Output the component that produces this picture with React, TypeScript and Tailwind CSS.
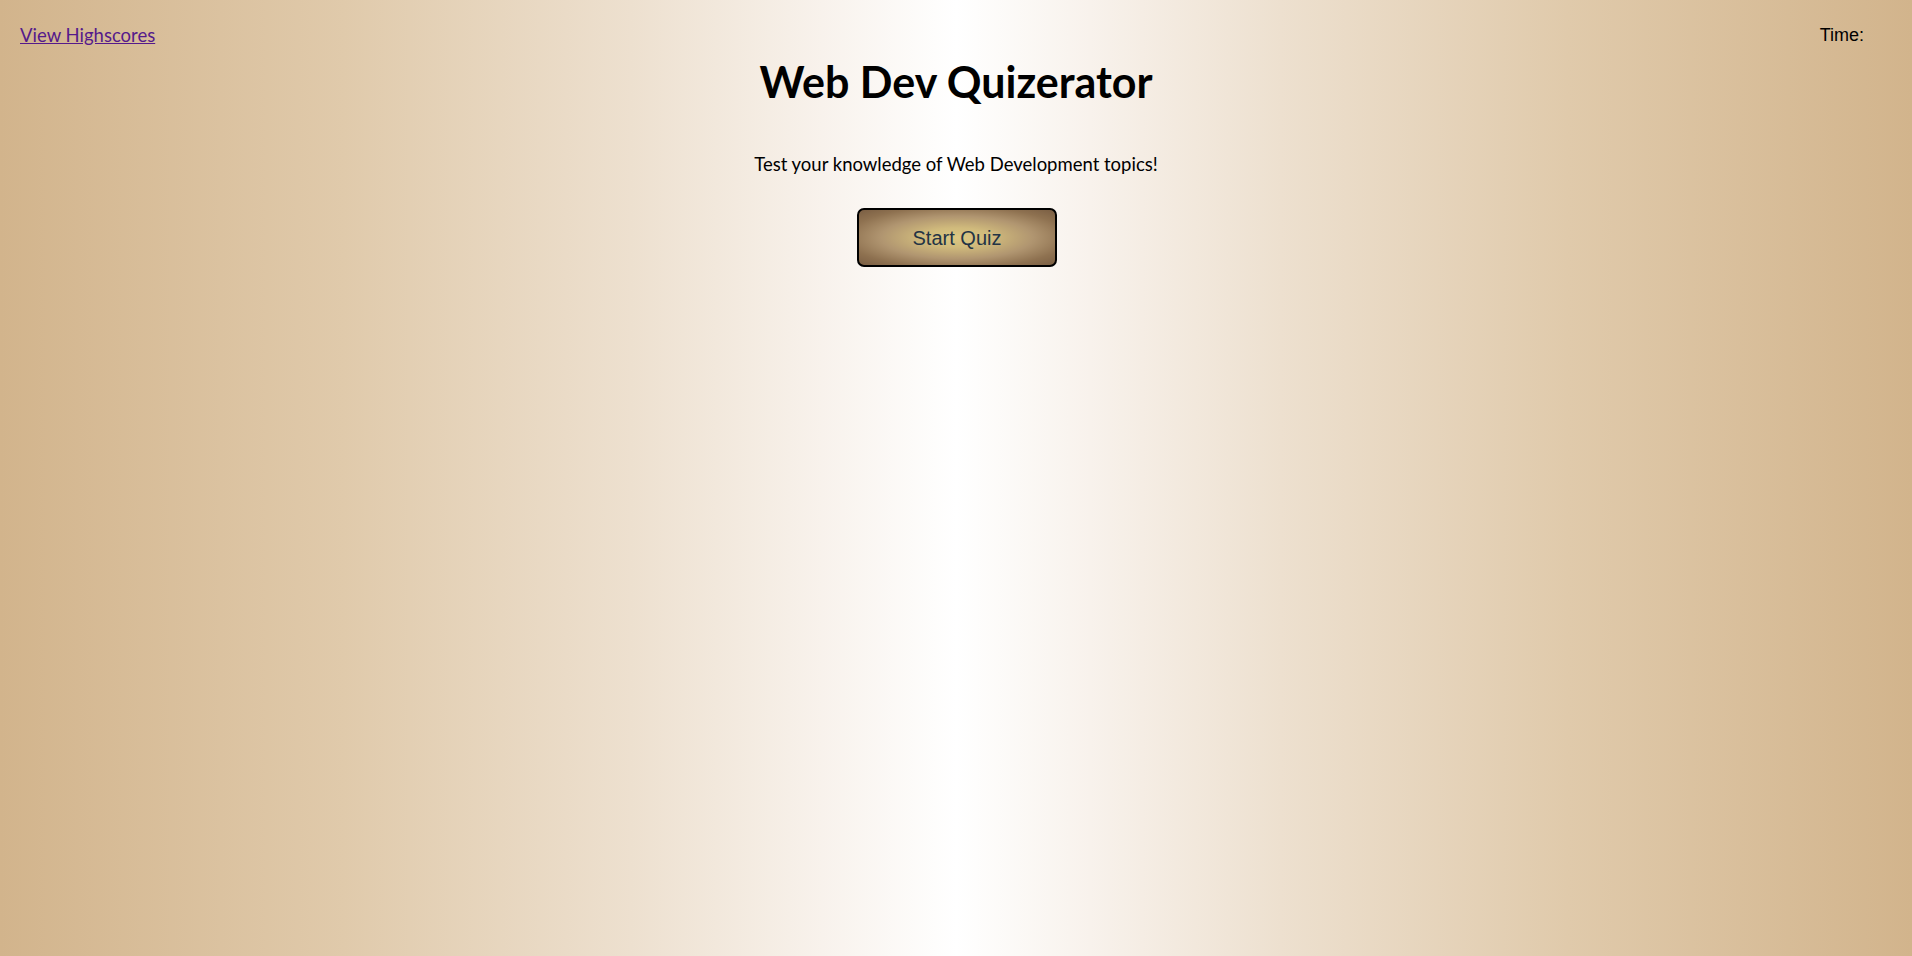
import React from "react";

export default function App() {
  return (
    <div className="min-h-[956px] w-full text-black bg-[linear-gradient(to_right,#d2b48c_0%,#e0caab_18%,#ede0cf_33%,#f8f2ec_43%,#ffffff_50%,#f8f2ec_57%,#ede0cf_67%,#e0caab_82%,#d2b48c_100%)]">
      <header className="flex justify-between pl-[20px] pr-[48px] pt-[23px]">
        <a
          href="#"
          className="text-[18.5px] leading-[24px] text-[#551a8b] underline font-['Lato','Noto_Sans',sans-serif]"
        >
          View Highscores
        </a>
        <div className="text-[18px] leading-[24px] font-['Liberation_Sans',Arial,sans-serif]">
          Time:
        </div>
      </header>
      <main className="flex flex-col items-center">
        <h1 className="mt-[11px] text-[43px] leading-[48px] font-bold font-['Lato','Noto_Sans',sans-serif]">
          Web Dev Quizerator
        </h1>
        <p className="mt-[46px] text-[18.5px] leading-[24px] font-['Lato','Noto_Sans',sans-serif]">
          Test your knowledge of Web Development topics!
        </p>
        <button className="mt-[32px] ml-[2px] w-[200px] h-[59px] rounded-[7px] border-2 border-black bg-[radial-gradient(ellipse_at_center,#dcc882_0%,#d0ba7c_25%,#b09570_55%,#8e7150_80%,#7a5e43_100%)] text-[20px] text-[#233445] font-['Liberation_Sans',Arial,sans-serif]">
          Start Quiz
        </button>
      </main>
    </div>
  );
}
